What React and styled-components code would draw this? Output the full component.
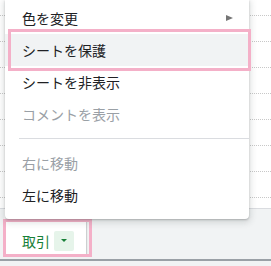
import React from 'react';
import styled, { createGlobalStyle } from 'styled-components';

const Global = createGlobalStyle`
  html, body {
    margin: 0;
    padding: 0;
    background: #f1f3f4;
    font-family: 'Noto Sans CJK JP', 'Noto Sans', sans-serif;
  }
`;

const Page = styled.div`
  position: relative;
  width: 271px;
  height: 266px;
  overflow: hidden;
  background: #f1f3f4;
`;

const Grid = styled.div`
  display: flex;
  flex-direction: column;
  height: 208px;
  background: #fff;
  border-bottom: 1px solid #dadce0;
`;

const GridRow = styled.div`
  height: ${p => p.h}px;
  flex-shrink: 0;
  border-bottom: 1px dotted #c8c8c8;
  box-sizing: border-box;
`;

const TabBar = styled.div`
  display: flex;
  height: 50px;
  border-bottom: 2px solid #9aa0a6;
  background: #f1f3f4;
`;

const Tab = styled.div`
  position: relative;
  display: flex;
  align-items: center;
  gap: 4px;
  box-sizing: border-box;
  margin-left: 4px;
  width: 82px;
  height: 45px;
  padding: 18px 0 0 18px;
  background: #fff;
  box-shadow: 1px 0 1px rgba(60, 64, 67, 0.2);
  color: #188038;
  font-size: 14px;

  &::after {
    content: '';
    position: absolute;
    top: 10px;
    left: -1px;
    right: -6px;
    bottom: -3px;
    border: 3px solid #f4b0c8;
  }
`;

const TabLabel = styled.span`
  line-height: 20px;
`;

const DropButton = styled.span`
  display: flex;
  align-items: center;
  justify-content: center;
  width: 20px;
  height: 20px;
  border-radius: 2px;
  background: #e6f4ea;

  &::before {
    content: '';
    border-left: 3px solid transparent;
    border-right: 3px solid transparent;
    border-top: 3px solid #188038;
  }
`;

const Menu = styled.div`
  position: absolute;
  top: 0;
  left: 5px;
  width: 244px;
  padding: 2px 0 8px;
  background: #fff;
  border-radius: 0 0 4px 4px;
  box-shadow: 0 2px 6px 2px rgba(60, 64, 67, 0.15), 0 1px 2px rgba(60, 64, 67, 0.3);
`;

const Item = styled.div`
  position: relative;
  display: flex;
  align-items: center;
  justify-content: space-between;
  height: 32px;
  padding: 0 16px 0 17px;
  font-size: 14px;
  color: ${p => (p.disabled ? '#9aa0a6' : '#202124')};
  background: ${p => (p.active ? '#f1f3f4' : 'transparent')};

  ${p => p.active && `
    &::after {
      content: '';
      position: absolute;
      top: -5px;
      bottom: -5px;
      left: 3px;
      right: -2px;
      border: 3px solid #f4b0c8;
    }
  `}
`;

const SubArrow = styled.span`
  border-left: 7px solid #757575;
  border-top: 3.5px solid transparent;
  border-bottom: 3.5px solid transparent;
`;

const Separator = styled.div`
  height: 1px;
  margin: 8px 0 8px 14px;
  background: #dadce0;
`;

export default function App() {
  return (
    <>
      <Global />
      <Page>
        <Grid>
          <GridRow h={16} />
          {[0, 1, 2, 3, 4, 5, 6].map(i => (
            <GridRow key={i} h={26} />
          ))}
        </Grid>
        <TabBar>
          <Tab>
            <TabLabel>取引</TabLabel>
            <DropButton />
          </Tab>
        </TabBar>
        <Menu>
          <Item>
            色を変更
            <SubArrow />
          </Item>
          <Item active>シートを保護</Item>
          <Item>シートを非表示</Item>
          <Item disabled>コメントを表示</Item>
          <Separator />
          <Item disabled>右に移動</Item>
          <Item>左に移動</Item>
        </Menu>
      </Page>
    </>
  );
}
